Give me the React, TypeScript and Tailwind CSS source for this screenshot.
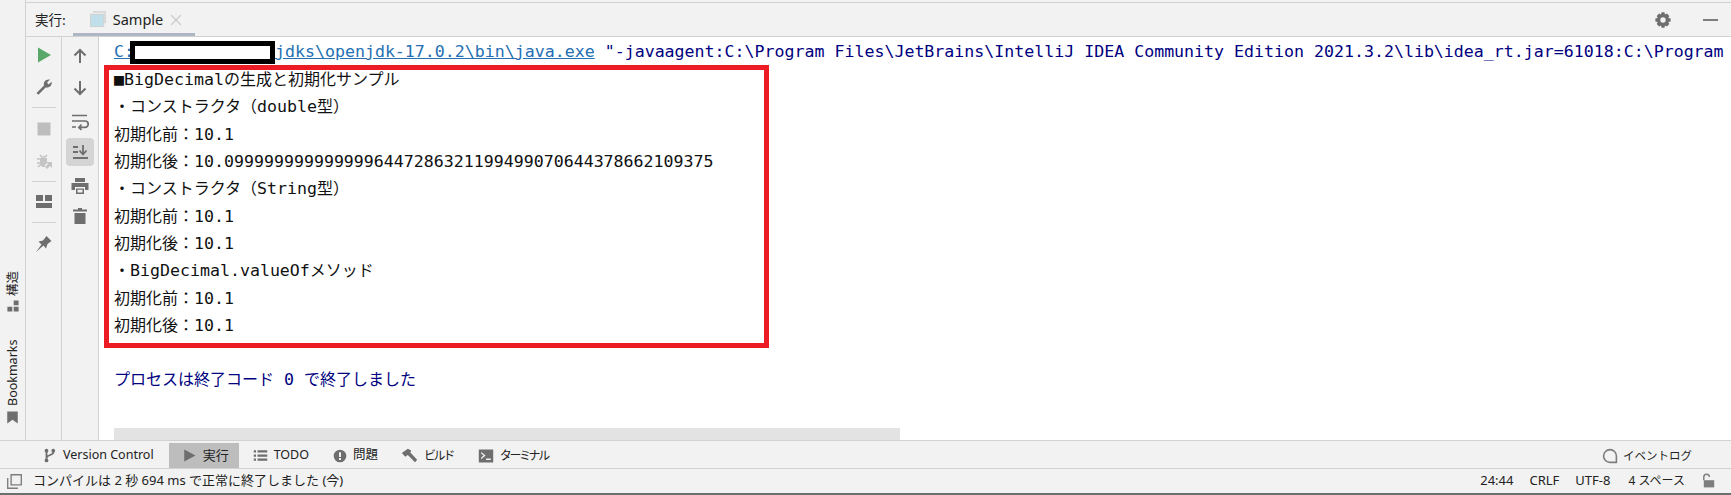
import type { ReactNode } from "react";

const mono = "font-['DejaVu_Sans_Mono',monospace] text-[16.6px]";

function M({ children }: { children: ReactNode }) {
  return <span className={mono}>{children}</span>;
}

function Line({ children }: { children: ReactNode }) {
  return <div className="h-[27.33px] whitespace-nowrap leading-[27.33px] text-[#111]">{children}</div>;
}

function Ico({ size = 20, children, className = "" }: { size?: number; children: ReactNode; className?: string }) {
  return (
    <svg width={size} height={size} viewBox="0 0 20 20" className={"block shrink-0 " + className}>
      {children}
    </svg>
  );
}

function Sep() {
  return <div className="my-[10px] h-px w-6 bg-[#d1d1d1]" />;
}

function RailLeft() {
  return (
    <div className="flex w-[36px] shrink-0 flex-col items-center border-r border-[#d1d1d1] pt-[8px]">
      <Ico>
        <path d="M4 2.5 L17 10 L4 17.5 Z" fill="#59a869" />
      </Ico>
      <Ico className="mt-[12px]">
        <path d="M2.5 16 L10 8.6 C9 5 12 1.8 16 2.6 L13 5.6 L14.6 7.6 L17.6 4.8 C18.4 8.6 15 11.4 11.6 10.4 L4.4 17.8 Z" fill="#6e6e6e" />
      </Ico>
      <Sep />
      <Ico className="mt-[1px]">
        <rect x="3.5" y="3.5" width="13" height="13" fill="#bdbdbd" />
      </Ico>
      <Ico className="mt-[12px]">
        <path d="M6 4 L8 6 H11 L13 4 M3 8 H6 M3 12 H6 M4 16 L6 14" stroke="#c4c4c4" strokeWidth="1.6" fill="none" />
        <path d="M6 7 H13 V12 L11 14 V16 H8 L6 14 Z" fill="#c4c4c4" />
        <path d="M12 11 H18 V17 L16 15 L13 18 L11 16 L14 13 Z" fill="#c4c4c4" />
      </Ico>
      <Sep />
      <Ico>
        <path d="M2 3 H9 V9 H2 Z M11 3 H18 V9 H11 Z M2 11 H18 V16 H2 Z" fill="#6e6e6e" />
      </Ico>
      <Sep />
      <Ico>
        <path d="M2 19 L7.5 11.5 L4.5 8.5 L9 7.5 L12.5 3 L17.5 8 L13.5 11 L12 15.5 L9.5 12.5 Z" fill="#6e6e6e" />
      </Ico>
    </div>
  );
}

function RailRight() {
  return (
    <div className="flex w-[37px] shrink-0 flex-col items-center border-r border-[#d1d1d1] pt-[9px]">
      <Ico>
        <path d="M10 17 V4 M4.5 9.5 L10 4 L15.5 9.5" stroke="#6e6e6e" strokeWidth="2" fill="none" />
      </Ico>
      <Ico className="mt-[12px]">
        <path d="M10 3 V16 M4.5 10.5 L10 16 L15.5 10.5" stroke="#6e6e6e" strokeWidth="2" fill="none" />
      </Ico>
      <Ico className="mt-[14px]">
        <path d="M2 3.5 H17 M2 9 H15 A3.2 3.2 0 0 1 15 15.4 H9 M2 15 H6 M11.5 12.6 L8.8 15.4 L11.5 18" stroke="#6e6e6e" strokeWidth="1.7" fill="none" />
      </Ico>
      <div className="mt-[6px] flex h-[28px] w-[28px] items-center justify-center rounded-[4px] bg-[#d4d4d4]">
        <Ico>
          <path d="M3 5 H8 M3 10 H8 M3 16 H18 M13 3 V12 M9.5 8.5 L13 12.5 L16.5 8.5" stroke="#6e6e6e" strokeWidth="1.8" fill="none" />
        </Ico>
      </div>
      <Ico className="mt-[10px]">
        <path d="M5 2 H15 V6 H5 Z M1.5 7 H18.5 V14 H15 V11 H5 V14 H1.5 Z M6 12.5 H14 V18 H6 Z M7.5 13.8 V16.6 H12.5 V13.8 Z" fill="#6e6e6e" fillRule="evenodd" />
      </Ico>
      <Ico className="mt-[10px]">
        <path d="M8 2 H12 V3.5 H17 V5.5 H3 V3.5 H8 Z M4.5 7 H15.5 V18 H4.5 Z" fill="#6e6e6e" />
      </Ico>
    </div>
  );
}

function LeftStrip() {
  return (
    <div className="flex w-[26px] shrink-0 flex-col items-center border-r border-[#d1d1d1] pt-[268px] text-[12.5px] text-[#222]">
      <span className="h-[28px] leading-[26px] [writing-mode:vertical-rl] [text-orientation:sideways] rotate-180">構造</span>
      <Ico size={14} className="mt-[3px]">
        <path d="M11 2 H18 V9 H11 Z M2 11 H9 V18 H2 Z M11 11 H18 V18 H11 Z" fill="#6e6e6e" />
      </Ico>
      <span className="mt-[29px] h-[64px] leading-[26px] [writing-mode:vertical-rl] rotate-180">Bookmarks</span>
      <Ico size={15} className="mt-[4px]">
        <path d="M3 2 H17 V18 L10 13 L3 18 Z" fill="#6e6e6e" />
      </Ico>
    </div>
  );
}

function Console() {
  return (
    <div className="flex min-w-0 flex-1 flex-col overflow-hidden bg-white text-[16px] font-['Noto_Sans_CJK_JP',sans-serif]">
      <div className="ml-[15px] flex-1">
        <div className="mt-[1px] flex h-[27px] items-center whitespace-nowrap leading-[27px] text-[#000080]">
          <M>
            <span className="text-[#2470b3] underline">C:</span>
            <span className="-ml-[4px] inline-block h-[23px] w-[145px] border-[5px] border-black bg-white align-middle" />
            <span className="text-[#2470b3] underline">jdks\openjdk-17.0.2\bin\java.exe</span>
            {' "-javaagent:C:\\Program Files\\JetBrains\\IntelliJ IDEA Community Edition 2021.3.2\\lib\\idea_rt.jar=61018:C:\\Program'}
          </M>
        </div>
        <div className="-ml-[10px] w-[665px] border-[5px] border-[#ed1c24] pb-[5px] pl-[5px]">
          <div className="-mt-[5px]">
            <Line>
              <M>■BigDecimal</M>の生成と初期化サンプル
            </Line>
            <Line>
              ・コンストラクタ（<M>double</M>型）
            </Line>
            <Line>
              初期化前：<M>10.1</M>
            </Line>
            <Line>
              初期化後：<M>10.0999999999999996447286321199499070644378662109375</M>
            </Line>
            <Line>
              ・コンストラクタ（<M>String</M>型）
            </Line>
            <Line>
              初期化前：<M>10.1</M>
            </Line>
            <Line>
              初期化後：<M>10.1</M>
            </Line>
            <Line>
              ・<M>BigDecimal.valueOf</M>メソッド
            </Line>
            <Line>
              初期化前：<M>10.1</M>
            </Line>
            <Line>
              初期化後：<M>10.1</M>
            </Line>
          </div>
        </div>
        <div className="mt-[17px] whitespace-nowrap leading-[27px] text-[#000080]">
          プロセスは終了コード<M>{" 0 "}</M>で終了しました
        </div>
      </div>
      <div className="ml-[15px] h-[12px] w-[786px] shrink-0 bg-[#e3e3e3]" />
    </div>
  );
}

function ToolTab({ icon, label, active = false, className = "", labelClass = "" }: { icon: ReactNode; label: string; active?: boolean; className?: string; labelClass?: string }) {
  return (
    <div className={"flex h-full items-center gap-[6px] whitespace-nowrap " + (active ? "bg-[#bdbdbd] px-[13px] " : "") + className}>
      {icon}
      <span className={labelClass}>{label}</span>
    </div>
  );
}

export default function App() {
  return (
    <div className="flex h-[495px] w-[1731px] flex-col overflow-hidden bg-[#f2f2f2] font-['Noto_Sans',Noto_Sans_CJK_JP,sans-serif] text-[#222]">
      <div className="flex min-h-0 flex-1">
        <LeftStrip />
        <div className="flex min-w-0 flex-1 flex-col">
          <div className="mt-[2px] flex h-[35px] shrink-0 items-center border-y border-[#d1d1d1] pr-[13px] text-[13.5px]">
            <span className="ml-[9px] font-['Noto_Sans_CJK_JP',sans-serif]">実行:</span>
            <div className="ml-[7px] flex h-full w-[122px] items-center border-b-[3px] border-[#aeb6c6] pl-[16px] pt-[3px]">
              <Ico size={19}>
                <path d="M4 1 H18 V14 H16 V3 H4 Z" fill="#d8d8d8" />
                <rect x="1.5" y="4.5" width="14" height="13" fill="#bfe0ea" stroke="#d0d0d0" />
              </Ico>
              <span className="ml-[5px] text-[14.5px]">Sample</span>
              <Ico size={14} className="ml-[6px]">
                <path d="M3 3 L17 17 M17 3 L3 17" stroke="#c4c4c4" strokeWidth="1.6" />
              </Ico>
            </div>
            <Ico size={18} className="ml-auto">
              <path
                d="M8.4 1.5 H11.6 L12.2 4 L14.4 2.9 L17 5.5 L15.9 7.7 L18.5 8.4 V11.6 L15.9 12.3 L17 14.5 L14.4 17.1 L12.2 16 L11.6 18.5 H8.4 L7.8 16 L5.6 17.1 L3 14.5 L4.1 12.3 L1.5 11.6 V8.4 L4.1 7.7 L3 5.5 L5.6 2.9 L7.8 4 Z M10 7 A3 3 0 1 0 10 13 A3 3 0 1 0 10 7 Z"
                fill="#6e6e6e"
                fillRule="evenodd"
              />
            </Ico>
            <div className="ml-[31px] h-[2px] w-[15px] bg-[#7d7d7d]" />
          </div>
          <div className="flex min-h-0 flex-1">
            <RailLeft />
            <RailRight />
            <Console />
          </div>
        </div>
      </div>
      <div className="flex h-[28px] shrink-0 items-center border-t border-[#d1d1d1] pt-[2px] text-[12.5px]">
        <ToolTab
          className="ml-[42px]"
          icon={
            <Ico size={15}>
              <circle cx="6" cy="3.5" r="2.5" fill="#6e6e6e" />
              <circle cx="15" cy="3.5" r="2.5" fill="#6e6e6e" />
              <circle cx="6" cy="16.5" r="2.5" fill="#6e6e6e" />
              <path d="M6 3 V17 M15 4 V6 C15 9.5 7 9 6 13" stroke="#6e6e6e" strokeWidth="2.4" fill="none" />
            </Ico>
          }
          label="Version Control"
        />
        <ToolTab
          active
          className="ml-[15px] w-[70px] text-[13px]"
          icon={
            <Ico size={15}>
              <path d="M3 2 L18 10 L3 18 Z" fill="#6e6e6e" />
            </Ico>
          }
          label="実行"
        />
        <ToolTab
          className="ml-[14px]"
          icon={
            <Ico size={15}>
              <path d="M1 3 H4 V6 H1 Z M6 3 H19 V6 H6 Z M1 8.5 H4 V11.5 H1 Z M6 8.5 H19 V11.5 H6 Z M1 14 H4 V17 H1 Z M6 14 H19 V17 H6 Z" fill="#6e6e6e" />
            </Ico>
          }
          label="TODO"
        />
        <ToolTab
          className="ml-[24px]"
          icon={
            <Ico size={14}>
              <path d="M10 1 A9 9 0 1 0 10 19 A9 9 0 1 0 10 1 Z M8.6 4.5 H11.4 V11.5 H8.6 Z M8.6 13 H11.4 V15.6 H8.6 Z" fill="#6e6e6e" fillRule="evenodd" />
            </Ico>
          }
          label="問題"
        />
        <ToolTab
          className="ml-[23px]"
          icon={
            <Ico size={17}>
              <path d="M1 7 L8 2 L12 4 L11 6.5 L19 15 L16.5 18 L8 9.5 L5 11.5 Z" fill="#6e6e6e" />
            </Ico>
          }
          label="ビルド"
          labelClass="text-[12px] tracking-[-2.4px]"
        />
        <ToolTab
          className="ml-[25px]"
          icon={
            <Ico size={16}>
              <path d="M1 2 H19 V18 H1 Z M4 5 L4 7 L7 9.5 L4 12 V14 L9.5 9.5 Z M10 13 V15 H16 V13 Z" fill="#6e6e6e" fillRule="evenodd" />
            </Ico>
          }
          label="ターミナル"
          labelClass="text-[12px] tracking-[-2.4px]"
        />
        <div className="ml-auto mr-[39px] flex items-center gap-[5px] text-[11.5px]">
          <Ico size={16}>
            <path d="M10 2 A8 8 0 0 0 10 18 H18 V10 A8 8 0 0 0 10 2 Z" fill="none" stroke="#7d7d7d" strokeWidth="2" />
          </Ico>
          <span>イベントログ</span>
        </div>
      </div>
      <div className="flex h-[25px] shrink-0 items-center border-t border-[#d1d1d1] text-[13px]">
        <Ico size={17} className="ml-[6px]">
          <path d="M6 2 H18 V14 H6 Z M2 6 V18 H14" fill="none" stroke="#7d7d7d" strokeWidth="1.6" />
        </Ico>
        <span className="ml-[10px]">コンパイルは 2 秒 694 ms で正常に終了しました (今)</span>
        <span className="ml-auto">24:44</span>
        <span className="ml-[16px]">CRLF</span>
        <span className="ml-[16px]">UTF-8</span>
        <span className="ml-[18px] text-[12px]">4 スペース</span>
        <Ico size={16} className="ml-[14px] mr-[16px]">
          <path d="M6 9 V5 A3.5 3.5 0 0 1 13 5" fill="none" stroke="#7d7d7d" strokeWidth="1.8" />
          <rect x="6" y="9" width="13" height="9" fill="#7d7d7d" />
        </Ico>
      </div>
      <div className="h-[2px] shrink-0 bg-[#6e6e6e]" />
    </div>
  );
}
